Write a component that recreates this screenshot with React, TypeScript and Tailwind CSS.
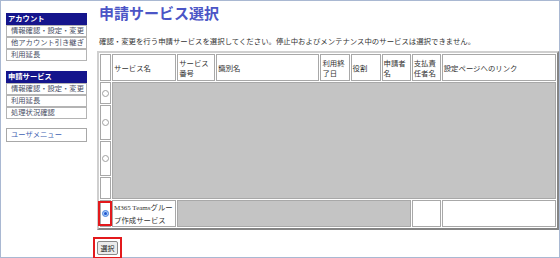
const sideGroups = [
  { title: 'アカウント', items: ['情報確認・設定・変更', '他アカウント引き継ぎ', '利用延長'] },
  { title: '申請サービス', items: ['情報確認・設定・変更', '利用延長', '処理状況確認'] },
]

// 列幅（セル枠込み）
const colWidths = ['w-[11px]', 'w-[64px]', 'w-[38px]', 'w-[103px]', 'w-[29px]', 'w-[30px]', 'w-[29px]', 'w-[29px]', 'w-[114px]']

const headers: string[][] = [
  ['サービス名'],
  ['サービス', '番号'],
  ['識別名'],
  ['利用終', '了日'],
  ['役割'],
  ['申請者', '名'],
  ['支払責', '任者名'],
  ['設定ページへのリンク'],
]

const cell = 'border border-[#a8a8a8] px-[1px] align-middle'

function Radio({ checked = false }: { checked?: boolean }) {
  if (checked) {
    return (
      <span className="mx-auto flex h-[7px] w-[7px] items-center justify-center rounded-full border border-[#4a86e0] bg-[#a9cbf6]">
        <span className="h-[3px] w-[3px] rounded-full bg-[#1d55d0]" />
      </span>
    )
  }
  return <span className="mx-auto block h-[7px] w-[7px] rounded-full border border-[#a0a0a0] bg-white" />
}

export default function App() {
  return (
    <div className="flex h-[258px] w-[560px] border border-[#a9b8d2] bg-white font-['Noto_Sans_CJK_JP','Liberation_Sans',sans-serif] text-[#333]">
      {/* サイドメニュー */}
      <div className="ml-[5px] mt-[12px] w-[81px] shrink-0">
        {sideGroups.map((group, gi) => (
          <div key={group.title} className={gi > 0 ? 'mt-[10px]' : ''}>
            <div className="flex h-[12px] items-center bg-[#15158c] pl-[2px] text-[7.3px] font-bold leading-none text-white">
              {group.title}
            </div>
            {group.items.map(item => (
              <div
                key={item}
                className="flex h-[12px] items-center overflow-hidden whitespace-nowrap border border-[#b4b4b4] pl-[4px] text-[7.3px] leading-none text-[#474d63]"
              >
                {item}
              </div>
            ))}
          </div>
        ))}
        <div className="mt-[9px] flex h-[14px] items-center border border-[#a8a8a8] pl-[4px] text-[7.3px] leading-none text-[#3f62b3]">
          ユーザメニュー
        </div>
      </div>

      {/* メイン */}
      <div className="ml-[10px] flex flex-col">
        <h1 className="mt-[3px] pl-[2px] text-[15px] font-bold leading-[18px] text-[#4b55c6]">申請サービス選択</h1>
        <p className="mt-[14px] pl-[2px] text-[7.4px] leading-[10px] text-[#333]">
          確認・変更を行う申請サービスを選択してください。停止中およびメンテナンス中のサービスは選択できません。
        </p>

        <table className="mt-[5px] w-[462px] table-fixed border-separate border-spacing-[1px] border-2 border-t-[#cfcfcf] border-l-[#cfcfcf] border-r-[#858585] border-b-[#858585] text-[7.4px] leading-[10px]">
          <colgroup>
            {colWidths.map((w, i) => (
              <col key={i} className={w} />
            ))}
          </colgroup>
          <thead>
            <tr className="h-[27px]">
              <th className={cell} />
              {headers.map((lines, i) => (
                <th key={i} className={`${cell} text-left font-normal`}>
                  {lines.map((l, j) => (
                    <span key={j} className="block">
                      {l}
                    </span>
                  ))}
                </th>
              ))}
            </tr>
          </thead>
          <tbody>
            <tr className="h-[22px]">
              <td className={cell}>
                <Radio />
              </td>
              <td colSpan={8} rowSpan={4} className={`${cell} bg-[#c4c4c4]`} />
            </tr>
            <tr className="h-[35px]">
              <td className={cell}>
                <Radio />
              </td>
            </tr>
            <tr className="h-[35px]">
              <td className={cell}>
                <Radio />
              </td>
            </tr>
            <tr className="h-[22px]">
              <td className={cell} />
            </tr>
            <tr className="h-[26px]">
              <td className={`${cell} relative`}>
                <Radio checked />
                <span className="absolute -left-[3px] -right-[2px] top-0 bottom-0 border-2 border-[#e3191c]" />
              </td>
              <td className={`${cell} leading-[12px]`}>
                <span className="block">
                  <span className="font-['Liberation_Serif',serif] text-[7px]">M365 Teams</span>グルー
                </span>
                <span className="block">プ作成サービス</span>
              </td>
              <td colSpan={5} className={`${cell} bg-[#c4c4c4]`} />
              <td className={cell} />
              <td className={cell} />
            </tr>
          </tbody>
        </table>

        <div className="-ml-[4px] mt-[7px] w-[29px] border-2 border-[#e3191c] p-[2px]">
          <button className="flex h-[14px] w-[21px] items-center justify-center rounded-[2px] border border-[#8a8a8a] bg-[#ececec] text-[7px] leading-none text-[#222]">
            選択
          </button>
        </div>
      </div>
    </div>
  )
}
